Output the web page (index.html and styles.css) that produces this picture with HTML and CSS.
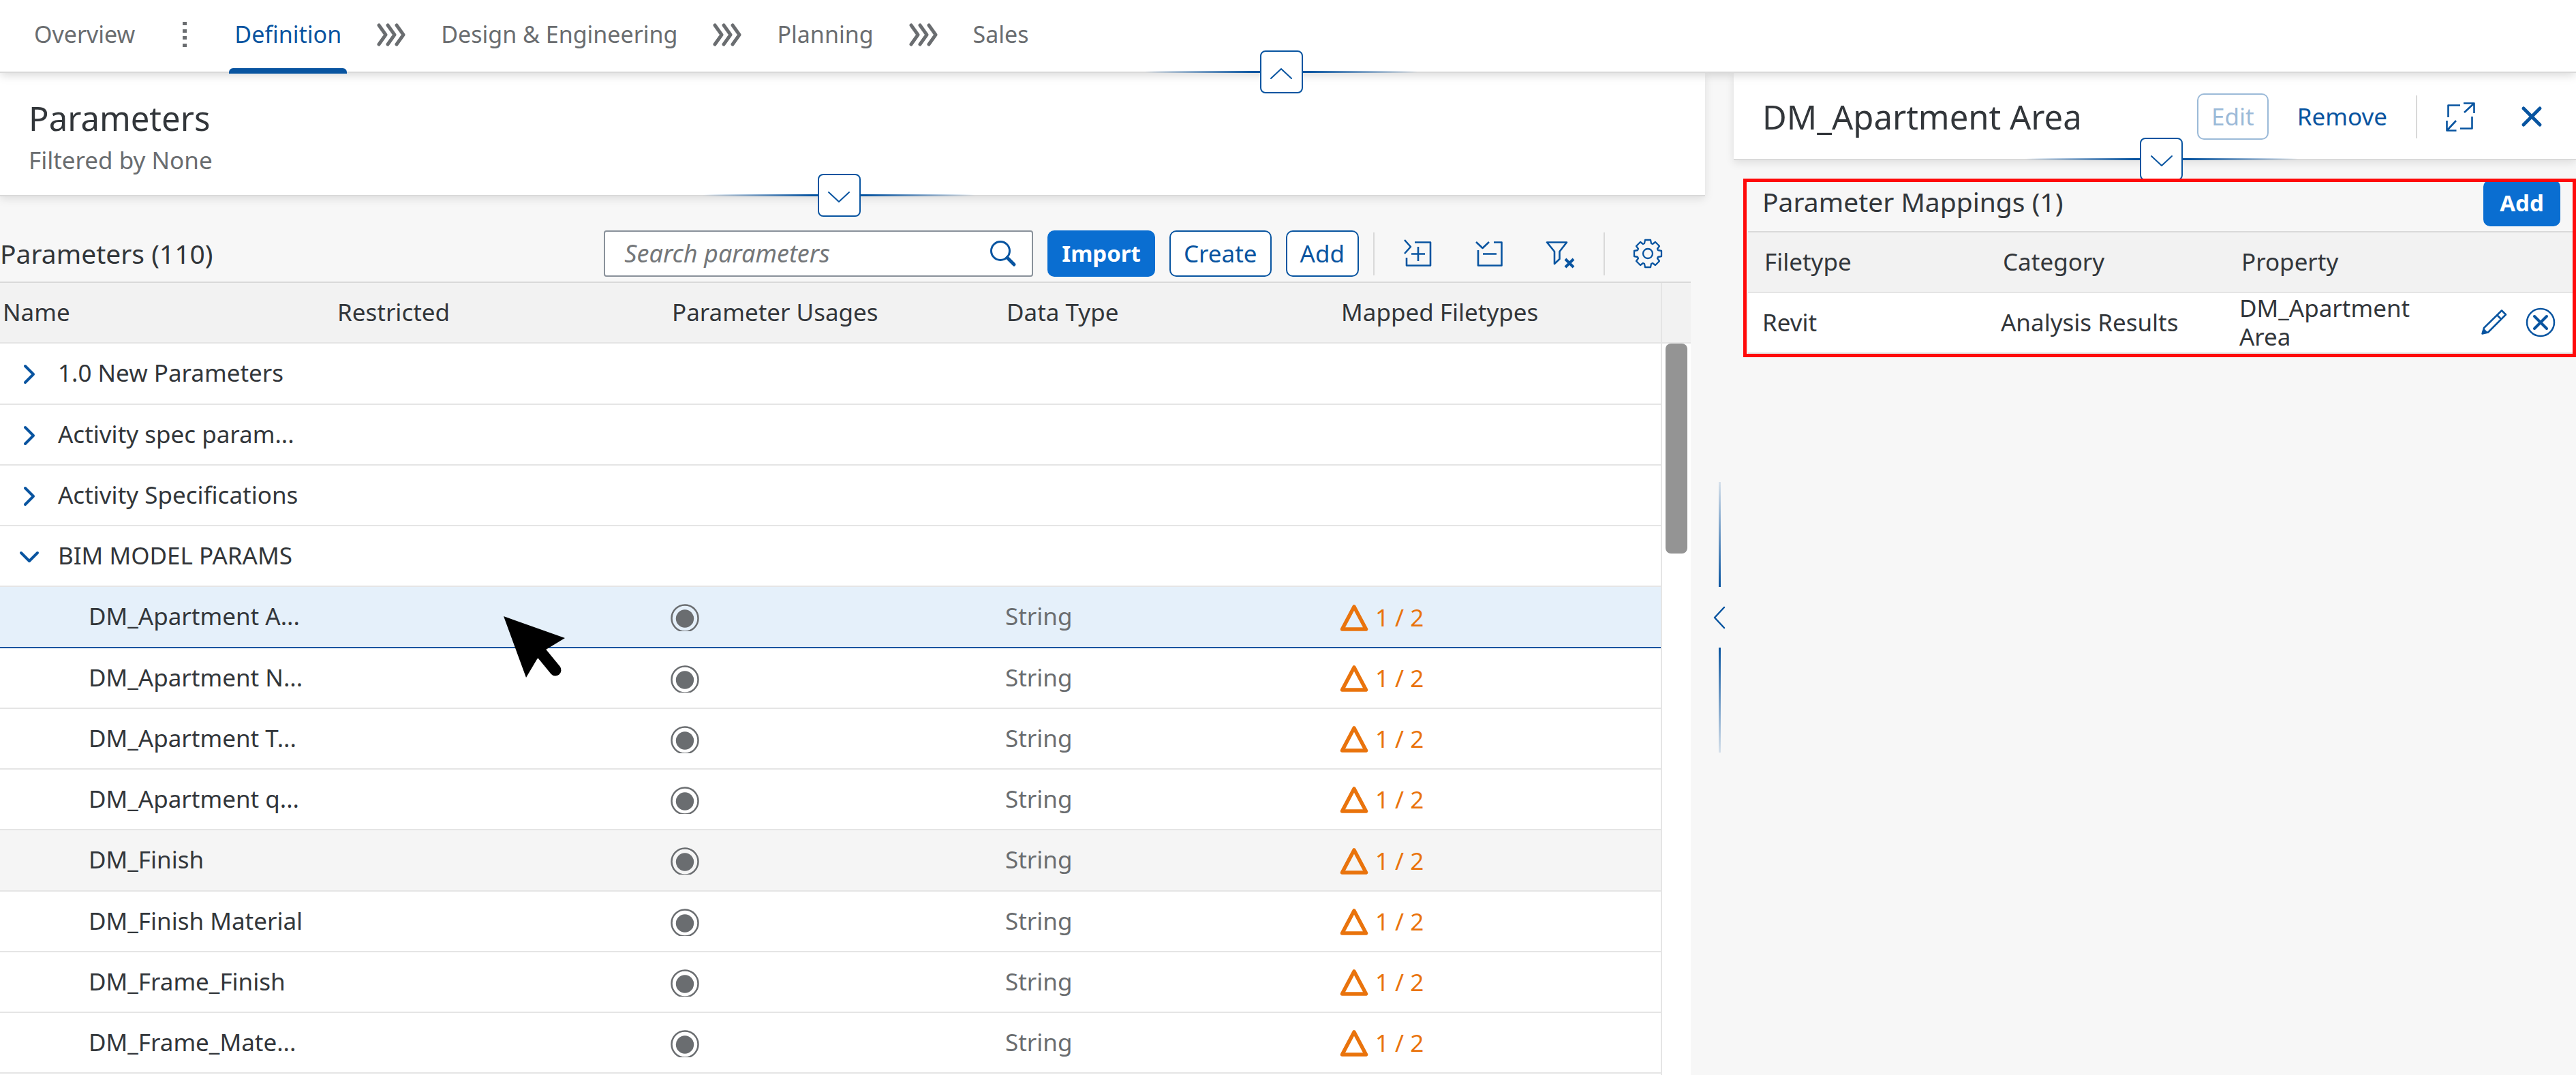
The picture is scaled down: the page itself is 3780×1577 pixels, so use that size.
FILE: index.html
```html
<!DOCTYPE html>
<html lang="en">
<head>
<meta charset="utf-8">
<title>Parameters</title>
<link rel="stylesheet" href="styles.css">
</head>
<body>
<svg class="sprite" aria-hidden="true">
  <symbol id="i-phase" viewBox="0 0 42 34"><path d="M3 3 13 17 3 31M16 3 26 17 16 31M29 3 39 17 29 31" fill="none" stroke="currentColor" stroke-width="5" stroke-linecap="round" stroke-linejoin="round"/></symbol>
  <symbol id="i-up" viewBox="0 0 36 20"><path d="M3 17 18 3 33 17" fill="none" stroke="currentColor" stroke-width="2" stroke-linecap="round" stroke-linejoin="round"/></symbol>
  <symbol id="i-down" viewBox="0 0 36 20"><path d="M3 3 18 17 33 3" fill="none" stroke="currentColor" stroke-width="2" stroke-linecap="round" stroke-linejoin="round"/></symbol>
  <symbol id="i-closed" viewBox="0 0 32 32"><path d="M10 4 22 16 10 28" fill="none" stroke="currentColor" stroke-width="4" stroke-linecap="round" stroke-linejoin="round"/></symbol>
  <symbol id="i-open" viewBox="0 0 32 32"><path d="M4 10 16 22 28 10" fill="none" stroke="currentColor" stroke-width="4" stroke-linecap="round" stroke-linejoin="round"/></symbol>
  <symbol id="i-usage" viewBox="0 0 42 40"><circle cx="21" cy="21" r="19.5" fill="none" stroke="currentColor" stroke-width="2.5"/><circle cx="21" cy="21.5" r="13.2" fill="currentColor"/></symbol>
  <symbol id="i-warn" viewBox="0 0 42 40"><path d="M21 4 38.500 37H3.500Z" fill="none" stroke="currentColor" stroke-width="5.500" stroke-linejoin="round"/></symbol>
</svg>

<header class="phases">
  <nav class="tabs" aria-label="Project phases">
    <a class="tab" href="#overview">Overview</a>
    <svg class="tab-sep" viewBox="0 0 42 38" aria-hidden="true"><path d="M18 0h6v5h-6zM18 11h6v5h-6zM18 21h6v5h-6zM18 32h6v5h-6z" fill="currentColor"/></svg>
    <a class="tab tab-active" href="#definition" aria-current="page">Definition</a>
    <svg class="tab-sep" aria-hidden="true"><use href="#i-phase"/></svg>
    <a class="tab" href="#design">Design &amp; Engineering</a>
    <svg class="tab-sep" aria-hidden="true"><use href="#i-phase"/></svg>
    <a class="tab" href="#planning">Planning</a>
    <svg class="tab-sep" aria-hidden="true"><use href="#i-phase"/></svg>
    <a class="tab" href="#sales">Sales</a>
  </nav>
  <div class="fold fold-page"><button class="fold-btn" type="button" aria-label="Collapse header"><svg aria-hidden="true"><use href="#i-up"/></svg></button></div>
</header>

<div class="columns">
  <main class="list">
    <div class="list-head">
      <h1 class="title">Parameters</h1>
      <p class="subtitle">Filtered by None</p>
      <div class="fold fold-list"><button class="fold-btn" type="button" aria-label="Expand filters"><svg aria-hidden="true"><use href="#i-down"/></svg></button></div>
    </div>

    <section class="list-body">
      <div class="toolbar">
        <h2 class="toolbar-title">Parameters (110)</h2>
        <label class="search">
          <input class="search-input" type="text" placeholder="Search parameters" aria-label="Search parameters">
          <svg class="icon" viewBox="0 0 44 44" aria-hidden="true"><circle cx="18" cy="18" r="13.500" fill="none" stroke="currentColor" stroke-width="3"/><path d="M28 28 38 38" fill="none" stroke="currentColor" stroke-width="5" stroke-linecap="round"/></svg>
        </label>
        <button class="btn btn-main" type="button">Import</button>
        <button class="btn" type="button">Create</button>
        <button class="btn" type="button">Add</button>
        <span class="divider"></span>
        <button class="icon-btn" type="button" aria-label="Expand all"><svg class="icon" viewBox="18 20 44 44"><path d="M36 25.500H59V59.500H24V48M31 42.500H51M41 32V53M21 22 30 32 21 42" fill="none" stroke="currentColor" stroke-width="2.600" stroke-linejoin="round"/></svg></button>
        <button class="icon-btn" type="button" aria-label="Collapse all"><svg class="icon" viewBox="123 20 44 44"><path d="M152 25.500H163.500V59.500H129V37M136 42.500H156M126 25 135.500 34 145 25" fill="none" stroke="currentColor" stroke-width="2.600" stroke-linejoin="round"/></svg></button>
        <button class="icon-btn" type="button" aria-label="Clear filters"><svg class="icon" viewBox="228 20 44 44"><path d="M230 25.500H259L248.500 39V50L241 57V39Z" fill="none" stroke="currentColor" stroke-width="2.600" stroke-linejoin="round"/><path d="M257 50 269 62M269 50 257 62" fill="none" stroke="currentColor" stroke-width="4"/></svg></button>
        <span class="divider"></span>
        <button class="icon-btn" type="button" aria-label="Settings"><svg class="icon" viewBox="-22 -22 44 44"><path d="M-4-20H4L5-15 7-14 11-17 17-11 14-7 15-5 20-4V4L15 5 14 7 17 11 11 17 7 14 5 15 4 20H-4L-5 15-7 14-11 17-17 11-14 7-15 5-20 4V-4L-15-5-14-7-17-11-11-17-7-14-5-15Z" fill="none" stroke="currentColor" stroke-width="2.300" stroke-linejoin="round"/><circle r="7" fill="none" stroke="currentColor" stroke-width="2.300"/></svg></button>
      </div>

      <div class="grid">
        <table class="params">
          <colgroup><col class="c-param"><col class="c-param"><col class="c-param"><col class="c-param"><col></colgroup>
          <thead>
            <tr><th>Name</th><th>Restricted</th><th>Parameter Usages</th><th>Data Type</th><th>Mapped Filetypes</th></tr>
          </thead>
          <tbody>
            <tr><td colspan="5"><button class="group" type="button" aria-expanded="false"><svg aria-hidden="true"><use href="#i-closed"/></svg>1.0 New Parameters</button></td></tr>
            <tr><td colspan="5"><button class="group" type="button" aria-expanded="false"><svg aria-hidden="true"><use href="#i-closed"/></svg>Activity spec param...</button></td></tr>
            <tr><td colspan="5"><button class="group" type="button" aria-expanded="false"><svg aria-hidden="true"><use href="#i-closed"/></svg>Activity Specifications</button></td></tr>
            <tr><td colspan="5"><button class="group" type="button" aria-expanded="true"><svg aria-hidden="true"><use href="#i-open"/></svg>BIM MODEL PARAMS</button></td></tr>
            <tr class="selected"><td class="leaf">DM_Apartment A...</td><td></td><td class="usage"><svg aria-label="Used"><use href="#i-usage"/></svg></td><td class="type">String</td><td class="mapped"><svg aria-label="Warning"><use href="#i-warn"/></svg><span>1 / 2</span></td></tr>
            <tr><td class="leaf">DM_Apartment N...</td><td></td><td class="usage"><svg aria-label="Used"><use href="#i-usage"/></svg></td><td class="type">String</td><td class="mapped"><svg aria-label="Warning"><use href="#i-warn"/></svg><span>1 / 2</span></td></tr>
            <tr><td class="leaf">DM_Apartment T...</td><td></td><td class="usage"><svg aria-label="Used"><use href="#i-usage"/></svg></td><td class="type">String</td><td class="mapped"><svg aria-label="Warning"><use href="#i-warn"/></svg><span>1 / 2</span></td></tr>
            <tr><td class="leaf">DM_Apartment q...</td><td></td><td class="usage"><svg aria-label="Used"><use href="#i-usage"/></svg></td><td class="type">String</td><td class="mapped"><svg aria-label="Warning"><use href="#i-warn"/></svg><span>1 / 2</span></td></tr>
            <tr class="hovered"><td class="leaf">DM_Finish</td><td></td><td class="usage"><svg aria-label="Used"><use href="#i-usage"/></svg></td><td class="type">String</td><td class="mapped"><svg aria-label="Warning"><use href="#i-warn"/></svg><span>1 / 2</span></td></tr>
            <tr><td class="leaf">DM_Finish Material</td><td></td><td class="usage"><svg aria-label="Used"><use href="#i-usage"/></svg></td><td class="type">String</td><td class="mapped"><svg aria-label="Warning"><use href="#i-warn"/></svg><span>1 / 2</span></td></tr>
            <tr><td class="leaf">DM_Frame_Finish</td><td></td><td class="usage"><svg aria-label="Used"><use href="#i-usage"/></svg></td><td class="type">String</td><td class="mapped"><svg aria-label="Warning"><use href="#i-warn"/></svg><span>1 / 2</span></td></tr>
            <tr><td class="leaf">DM_Frame_Mate...</td><td></td><td class="usage"><svg aria-label="Used"><use href="#i-usage"/></svg></td><td class="type">String</td><td class="mapped"><svg aria-label="Warning"><use href="#i-warn"/></svg><span>1 / 2</span></td></tr>
          </tbody>
        </table>
        <div class="gutter" aria-hidden="true">
          <div class="gutter-head"></div>
          <div class="thumb"></div>
        </div>
        <svg class="cursor" viewBox="0 0 94 94" aria-hidden="true"><path d="M1 1 91 33 63 50 50 64 34 91Z" fill="#000"/><path d="M54 52 77 80" stroke="#000" stroke-width="17" stroke-linecap="round"/></svg>
      </div>
    </section>
  </main>

  <div class="splitter">
    <span class="split-line split-line-top"></span>
    <button class="split-btn" type="button" aria-label="Resize panels"><svg viewBox="0 0 20 34" aria-hidden="true"><path d="M17 2 3 17 17 32" fill="none" stroke="currentColor" stroke-width="2.500" stroke-linecap="round" stroke-linejoin="round"/></svg></button>
    <span class="split-line split-line-bottom"></span>
  </div>

  <aside class="detail">
    <div class="detail-head">
      <h2 class="title detail-title">DM_Apartment Area</h2>
      <button class="btn" type="button" disabled>Edit</button>
      <button class="btn btn-plain" type="button">Remove</button>
      <span class="divider"></span>
      <button class="icon-btn" type="button" aria-label="Full screen"><svg class="icon" viewBox="388 40 44 44"><path d="M410 45.500H392.500V63M427.500 62V79.500H410M416 56 430 43M415 42.500H430.500V57M404 68 391 82M390.500 68V82.500H404.500" fill="none" stroke="currentColor" stroke-width="2.600" stroke-linejoin="round"/></svg></button>
      <button class="icon-btn" type="button" aria-label="Close"><svg class="icon" viewBox="0 0 44 44"><path d="M10 10 34 34M34 10 10 34" fill="none" stroke="currentColor" stroke-width="5" stroke-linecap="round"/></svg></button>
      <div class="fold fold-detail"><button class="fold-btn" type="button" aria-label="Expand details"><svg aria-hidden="true"><use href="#i-down"/></svg></button></div>
    </div>

    <section class="mappings">
      <div class="mappings-bar">
        <h3 class="toolbar-title">Parameter Mappings (1)</h3>
        <button class="btn btn-main" type="button">Add</button>
      </div>
      <table class="map-table">
        <colgroup><col class="c-map"><col class="c-map"><col class="c-prop"><col></colgroup>
        <thead><tr><th>Filetype</th><th>Category</th><th>Property</th><th></th></tr></thead>
        <tbody>
          <tr>
            <td>Revit</td><td>Analysis Results</td><td>DM_Apartment Area</td>
            <td><div class="row-actions">
              <button class="row-btn" type="button" aria-label="Edit mapping"><svg class="icon" viewBox="78 33 44 44"><path d="M82.500 71.500 85 63 111 37.500 117 43.500 91 69.500ZM104.500 44.500 110.500 50.500" fill="none" stroke="currentColor" stroke-width="2.500" stroke-linejoin="round"/><path d="M82 72 84 63 91 70Z" fill="currentColor"/></svg></button>
              <button class="row-btn" type="button" aria-label="Delete mapping"><svg class="icon" viewBox="0 0 44 44"><circle cx="22" cy="22" r="20" fill="none" stroke="currentColor" stroke-width="2.500"/><path d="M13 13 31 31M31 13 13 31" fill="none" stroke="currentColor" stroke-width="4" stroke-linecap="round"/></svg></button>
            </div></td>
          </tr>
        </tbody>
      </table>
      <div class="highlight" aria-hidden="true"></div>
    </section>
  </aside>
</div>
</body>
</html>
```
FILE: styles.css
```css
:root {
  --text: #32363a;
  --muted: #6a6d70;
  --blue: #0854a0;
  --accent: #0a6ed1;
  --orange: #e9730c;
  --page: #f7f7f7;
  --line: #d9d9d9;
  --row-line: #e5e5e5;
}

* { box-sizing: border-box; }

body {
  margin: 0;
  min-height: 100vh;
  display: flex;
  flex-direction: column;
  background: var(--page);
  color: var(--text);
  font: 35px/42px "Noto Sans", sans-serif;
}

h1, h2, h3, p { margin: 0; font-weight: 400; }

button {
  padding: 0;
  border: 0;
  background: none;
  color: var(--blue);
  font: inherit;
  cursor: pointer;
}

svg { display: block; flex: none; }
.sprite { position: absolute; width: 0; height: 0; }
.icon { width: 44px; height: 44px; }

/* Phase tabs */
.phases {
  position: relative;
  z-index: 2;
  background: #fff;
  border-bottom: 2px solid var(--line);
  box-shadow: 0 2px 14px rgba(0, 0, 0, .18);
}

.tabs {
  display: flex;
  align-items: center;
  gap: 44px;
  height: 105px;
  padding-left: 42px;
  font-size: 34px;
}

.tab {
  position: relative;
  height: 105px;
  padding: 0 8px 5px;
  line-height: 100px;
  color: var(--muted);
  text-decoration: none;
}

.tab-active { color: var(--blue); }

.tab-active::after {
  content: "";
  position: absolute;
  left: 0;
  right: 0;
  bottom: -3px;
  height: 8px;
  border-radius: 6px 6px 0 0;
  background: var(--blue);
}

.tab-sep {
  width: 42px;
  height: 38px;
  margin-bottom: 3px;
  color: var(--muted);
}

/* Fold buttons that sit on a header's lower edge */
.fold {
  position: absolute;
  bottom: -32px;
  left: 0;
  right: 20px;
  z-index: 1;
  display: flex;
  justify-content: center;
  pointer-events: none;
}

.fold::before {
  content: "";
  position: absolute;
  top: 30px;
  left: 50%;
  width: 400px;
  height: 3px;
  margin-left: -200px;
  background: linear-gradient(90deg, transparent, var(--blue) 40%, var(--blue) 60%, transparent);
}

.fold-list { right: 40px; }
.fold-detail { left: 19px; right: 0; }

.fold-btn {
  position: relative;
  display: flex;
  align-items: center;
  justify-content: center;
  width: 63px;
  height: 63px;
  padding-top: 4px;
  border: 2px solid var(--blue);
  border-radius: 8px;
  background: #fff;
  pointer-events: auto;
}

.fold-btn svg { width: 36px; height: 20px; }

/* Page columns */
.columns {
  flex: 1;
  display: grid;
  grid-template-columns: minmax(0, 2502fr) 42px minmax(0, 1236fr);
}

.list { display: flex; flex-direction: column; }

.list-head {
  position: relative;
  z-index: 1;
  padding: 34px 42px 27px;
  background: #fff;
  border-bottom: 2px solid var(--line);
  box-shadow: 0 4px 12px rgba(0, 0, 0, .1);
}

.title { font-size: 49px; line-height: 64px; }
.subtitle { margin-top: 6px; line-height: 48px; color: var(--muted); }

.list-body {
  flex: 1;
  display: flex;
  flex-direction: column;
  margin-right: 21px;
}

.toolbar {
  display: flex;
  align-items: center;
  gap: 21px;
  padding: 50px 21px 7px 0;
  border-bottom: 2px solid var(--line);
}

.toolbar-title { flex: 1; font-size: 39px; line-height: 56px; white-space: nowrap; }

.search {
  display: flex;
  align-items: center;
  width: 630px;
  height: 68px;
  padding: 0 20px 0 28px;
  border: 2px solid #89919a;
  border-radius: 4px;
  background: #fff;
  color: var(--blue);
}

.search-input {
  flex: 1;
  min-width: 0;
  padding: 0;
  border: 0;
  outline: 0;
  background: none;
  font: inherit;
  font-size: 36px;
  color: var(--text);
}

.search-input::placeholder { color: #74777a; font-style: italic; opacity: 1; }

.btn {
  height: 68px;
  padding: 0 19px;
  border: 2px solid var(--blue);
  border-radius: 10px;
  background: #fff;
}

.btn-main {
  min-width: 113px;
  border-color: var(--accent);
  background: var(--accent);
  color: #fff;
  font-size: 33px;
  font-weight: 700;
}

.btn-plain { border-color: transparent; background: none; }
.btn:disabled { opacity: .4; cursor: default; }

.divider { width: 2px; height: 63px; background: var(--line); }

.icon-btn {
  display: flex;
  align-items: center;
  justify-content: center;
  width: 84px;
  height: 68px;
}

/* Parameter table */
.grid { position: relative; flex: 1; display: flex; background: #fff; }

table { border-collapse: separate; border-spacing: 0; table-layout: fixed; }

th, td {
  height: 89px;
  padding: 0 0 2px;
  border-bottom: 2px solid var(--row-line);
  font-weight: 400;
  text-align: left;
  vertical-align: middle;
}

.params { flex: 1; align-self: flex-start; min-width: 0; }
.c-param { width: 491px; }
.params th { padding-left: 4px; background: #f2f2f2; white-space: nowrap; }
.params tbody tr:nth-child(4n + 1) td { height: 90px; }

.group { display: flex; align-items: center; gap: 26px; padding-left: 27px; color: var(--text); }
.group svg { width: 32px; height: 32px; margin-top: 4px; color: var(--blue); }

.params .leaf { padding-left: 130px; white-space: nowrap; }
.usage { color: var(--muted); }
.usage svg { width: 42px; height: 40px; margin: 4px 0 0 2px; }
.params .type { padding-left: 2px; color: var(--muted); }

.params .mapped { padding-left: 2px; color: var(--orange); }
.mapped svg, .mapped span { display: inline-block; vertical-align: middle; }
.mapped svg { width: 42px; height: 40px; margin-right: 10px; }

.selected td { background: #e5f0fa; border-bottom-color: var(--blue); }
.hovered td { background: #f5f5f5; }

.gutter { width: 44px; border-left: 2px solid var(--row-line); }
.gutter-head { height: 89px; background: #f2f2f2; border-bottom: 2px solid var(--row-line); }
.thumb { width: 32px; height: 308px; margin: 0 auto; border-radius: 8px; background: #949494; }

.cursor { position: absolute; left: 738px; top: 488px; width: 94px; height: 94px; }

/* Splitter */
.splitter {
  display: flex;
  flex-direction: column;
  align-items: center;
  padding-top: 600px;
}

.split-line { width: 3px; height: 154px; }
.split-line-top { background: linear-gradient(0deg, var(--blue), #0854a022); }
.split-line-bottom { background: linear-gradient(180deg, var(--blue), #0854a022); }

.split-btn {
  display: flex;
  align-items: center;
  justify-content: center;
  width: 42px;
  height: 89px;
}

.split-btn svg { width: 20px; height: 34px; }

/* Detail panel */
.detail-head {
  position: relative;
  display: flex;
  align-items: center;
  gap: 21px;
  padding: 30px 23px 28px 42px;
  background: #fff;
  border-bottom: 2px solid var(--line);
  box-shadow: 0 4px 12px rgba(0, 0, 0, .1);
}

.detail-title { flex: 1; white-space: nowrap; }

.mappings { position: relative; padding: 29px 5px 0 21px; }

.mappings-bar {
  display: flex;
  align-items: center;
  padding: 0 18px 7px 21px;
  border-bottom: 2px solid var(--line);
}

.mappings-bar .toolbar-title { line-height: 52px; padding-bottom: 4px; }

.map-table { width: 100%; }
.c-map { width: 350px; }
.c-prop { width: 280px; }
.map-table th { padding-left: 24px; background: #f2f2f2; }
.map-table td { padding-left: 21px; background: #fff; }
.row-actions { display: flex; justify-content: flex-end; gap: 24px; padding-right: 25px; }

/* Callout frame around the mappings section */
.highlight {
  position: absolute;
  z-index: 1;
  left: 14px;
  right: 0;
  top: 27px;
  bottom: -5px;
  border: 5px solid #ff0a0a;
}
```
